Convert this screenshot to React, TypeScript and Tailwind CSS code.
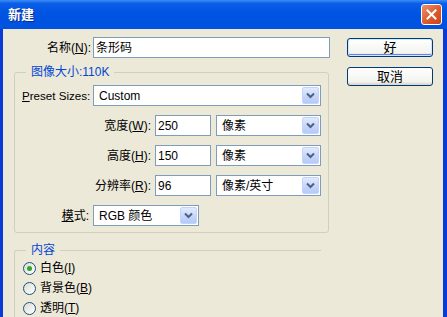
import React from "react";

const Chevron = () => (
  <svg width="9" height="7" viewBox="0 0 9 7">
    <path d="M1 1.5 L4.5 5 L8 1.5" fill="none" stroke="#4d6185" strokeWidth="2" />
  </svg>
);

const Select = ({ value, w }: { value: string; w: string }) => (
  <div className={`${w} h-[21px] border border-[#7F9DB9] bg-white flex items-center justify-between`}>
    <span className="pl-[5px] leading-[14px] whitespace-nowrap">{value}</span>
    <div className="w-[17px] h-[17px] mr-[1px] rounded-[2px] border border-[#c3d3fd] bg-[linear-gradient(to_bottom,#e1eafe,#c4d4f9_60%,#b6cbf7)] flex items-center justify-center">
      <Chevron />
    </div>
  </div>
);

const Input = ({ value, w }: { value: string; w: string }) => (
  <div className={`${w} h-[21px] border border-[#7F9DB9] bg-white flex items-center pl-[2px] leading-[14px]`}>
    {value}
  </div>
);

const Radio = ({ checked }: { checked?: boolean }) => (
  <div className="w-[13px] h-[13px] rounded-full border border-[#1C5180] bg-[linear-gradient(135deg,#dcdcd4,#ffffff)] flex items-center justify-center">
    {checked && <div className="w-[5px] h-[5px] rounded-full bg-[#31a531]" />}
  </div>
);

const Btn = ({ label, def }: { label: string; def?: boolean }) => (
  <div
    className={`w-[86px] h-[19px] rounded-[3px] border border-[#003C74] bg-[linear-gradient(to_bottom,#ffffff,#f3f3ef_80%,#d8d3c8)] flex items-center justify-center text-[13px] leading-[14px] ${
      def ? "shadow-[inset_0_0_0_1px_#cee7ff,inset_0_-1px_0_1px_#6982ee]" : ""
    }`}
  >
    {label}
  </div>
);

export default function App() {
  return (
    <div className="w-[447px] h-[317px] overflow-hidden flex flex-col bg-[#0a3bd6] font-['Liberation_Sans','Noto_Sans_CJK_SC',sans-serif] text-[12px] text-black">
      <div className="h-[29px] shrink-0 flex items-center justify-between pl-[8px] pr-[5px] bg-[linear-gradient(to_bottom,#3d8df5_0%,#0b5ee8_12%,#0054e3_45%,#0052df_100%)]">
        <span className="text-white font-bold text-[13px] leading-[16px] [text-shadow:1px_1px_#0b2a8f]">新建</span>
        <div className="w-[21px] h-[21px] rounded-[3px] border border-white bg-[linear-gradient(135deg,#ec9072,#dd5a2c_55%,#c8431a)] flex items-center justify-center">
          <svg width="11" height="11" viewBox="0 0 11 11">
            <path d="M1.5 1.5 L9.5 9.5 M9.5 1.5 L1.5 9.5" stroke="white" strokeWidth="2" strokeLinecap="square" />
          </svg>
        </div>
      </div>
      <div className="flex-1 flex ml-[3px] mr-[4px] bg-[#ECE9D8]">
        <div className="w-[327px] pl-[11px] pt-[8px] flex flex-col">
          <div className="flex items-center gap-[2px] h-[21px]">
            <span className="w-[77px] text-right whitespace-nowrap">
              名称(<span className="underline">N</span>):
            </span>
            <Input value="条形码" w="w-[237px]" />
          </div>
          <fieldset className="mt-[7px] w-[315px] border border-[#D0D0BF] rounded-[3px] px-[7px] pt-[6px] pb-[6px] flex flex-col gap-[9px]">
            <legend className="ml-[4px] px-[5px] text-[#0046D5] leading-[14px]">图像大小:110K</legend>
            <div className="flex items-center gap-[4px] h-[21px]">
              <span className="w-[67px] whitespace-nowrap text-[11.6px]">
                <span className="underline">P</span>reset Sizes:
              </span>
              <Select value="Custom" w="w-[228px]" />
            </div>
            <div className="flex items-center h-[21px]">
              <span className="w-[129px] text-right whitespace-nowrap">
                宽度(<span className="underline">W</span>):
              </span>
              <div className="ml-[4px]"><Input value="250" w="w-[56px]" /></div>
              <div className="ml-[5px]"><Select value="像素" w="w-[105px]" /></div>
            </div>
            <div className="flex items-center h-[21px]">
              <span className="w-[129px] text-right whitespace-nowrap">
                高度(<span className="underline">H</span>):
              </span>
              <div className="ml-[4px]"><Input value="150" w="w-[56px]" /></div>
              <div className="ml-[5px]"><Select value="像素" w="w-[105px]" /></div>
            </div>
            <div className="flex items-center h-[21px]">
              <span className="w-[129px] text-right whitespace-nowrap">
                分辨率(<span className="underline">R</span>):
              </span>
              <div className="ml-[4px]"><Input value="96" w="w-[56px]" /></div>
              <div className="ml-[5px]"><Select value="像素/英寸" w="w-[105px]" /></div>
            </div>
            <div className="flex items-center gap-[4px] h-[21px]">
              <span className="w-[67px] text-right whitespace-nowrap">
                <span className="underline">模</span>式:
              </span>
              <Select value="RGB 颜色" w="w-[106px]" />
            </div>
          </fieldset>
          <fieldset className="mt-[10px] w-[307px] border border-r-0 border-[#D0D0BF] rounded-l-[3px] pl-[7px] pt-[1px] flex flex-col">
            <legend className="ml-[4px] px-[5px] text-[#0046D5] leading-[14px]">内容</legend>
            <div className="flex items-center gap-[4px] h-[20px] ml-[1px]">
              <Radio checked />
              <span>白色(<span className="underline">I</span>)</span>
            </div>
            <div className="flex items-center gap-[4px] h-[20px] ml-[1px]">
              <Radio />
              <span>背景色(<span className="underline">B</span>)</span>
            </div>
            <div className="flex items-center gap-[4px] h-[20px] ml-[1px]">
              <Radio />
              <span>透明(<span className="underline">T</span>)</span>
            </div>
          </fieldset>
        </div>
        <div className="pl-[17px] pt-[9px] flex flex-col gap-[10px]">
          <Btn label="好" def />
          <Btn label="取消" />
        </div>
      </div>
    </div>
  );
}
